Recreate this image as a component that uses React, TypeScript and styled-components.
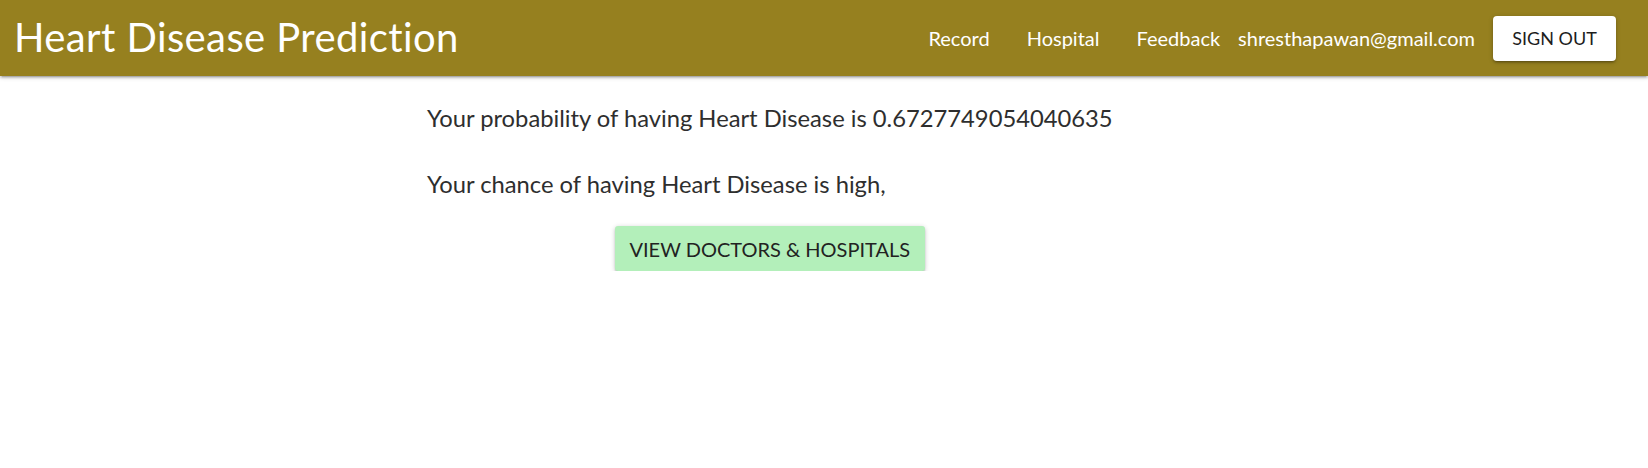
import React from "react";
import styled, { createGlobalStyle } from "styled-components";

const Global = createGlobalStyle`
  html, body { margin: 0; padding: 0; background: #ffffff; }
  body { font-family: "Lato", "Noto Sans", sans-serif; }
  * { box-sizing: border-box; }
`;

const Nav = styled.nav`
  height: 76px;
  background: #96801f;
  display: flex;
  align-items: center;
  padding: 0 32px 0 14px;
  box-shadow: 0 2px 2px 0 rgba(0,0,0,.14), 0 3px 1px -2px rgba(0,0,0,.12), 0 1px 5px 0 rgba(0,0,0,.2);
  position: relative;
  z-index: 1;
`;

const Brand = styled.div`
  color: #ffffff;
  font-size: 40px;
  font-weight: 400;
  letter-spacing: 0.4px;
  flex: 1;
  line-height: 1;
  margin-top: -3px;
`;

const Links = styled.div`
  display: flex;
  align-items: center;
`;

const NavLink = styled.a<{ $gap: number }>`
  color: #ffffff;
  font-size: 20px;
  text-decoration: none;
  margin-right: ${(p) => p.$gap}px;
  white-space: nowrap;
`;

const SignOut = styled.button`
  background: #ffffff;
  color: #1d1d1d;
  border: none;
  border-radius: 4px;
  height: 45px;
  width: 123px;
  padding: 0;
  font-family: inherit;
  font-size: 18px;
  text-transform: uppercase;
  box-shadow: 0 2px 2px 0 rgba(0,0,0,.14), 0 3px 1px -2px rgba(0,0,0,.12), 0 1px 5px 0 rgba(0,0,0,.2);
  cursor: pointer;
`;

const Main = styled.main`
  padding: 27px 0 0 427px;
`;

const Content = styled.div`
  display: inline-flex;
  flex-direction: column;
  align-items: flex-start;
`;

const Line = styled.p`
  margin: 0 0 36px 0;
  font-size: 23.75px;
  line-height: 30px;
  color: #2e2e2e;
  white-space: nowrap;
`;

const ActionButton = styled.button`
  align-self: center;
  margin-top: -9px;
  background: #b3efba;
  color: #222222;
  border: none;
  border-radius: 3px;
  height: 45px;
  width: 310px;
  padding: 0;
  font-family: inherit;
  font-size: 20px;
  text-transform: uppercase;
  box-shadow: 0 2px 2px 0 rgba(0,0,0,.14), 0 3px 1px -2px rgba(0,0,0,.12), 0 1px 5px 0 rgba(0,0,0,.2);
  cursor: pointer;
`;

export default function App() {
  return (
    <>
      <Global />
      <Nav>
        <Brand>Heart Disease Prediction</Brand>
        <Links>
          <NavLink href="#" $gap={37}>Record</NavLink>
          <NavLink href="#" $gap={37}>Hospital</NavLink>
          <NavLink href="#" $gap={18}>Feedback</NavLink>
          <NavLink href="#" $gap={18}>shresthapawan@gmail.com</NavLink>
          <SignOut>Sign Out</SignOut>
        </Links>
      </Nav>
      <Main>
        <Content>
          <Line>Your probability of having Heart Disease is 0.6727749054040635</Line>
          <Line>Your chance of having Heart Disease is high,</Line>
          <ActionButton>View Doctors &amp; Hospitals</ActionButton>
        </Content>
      </Main>
    </>
  );
}
